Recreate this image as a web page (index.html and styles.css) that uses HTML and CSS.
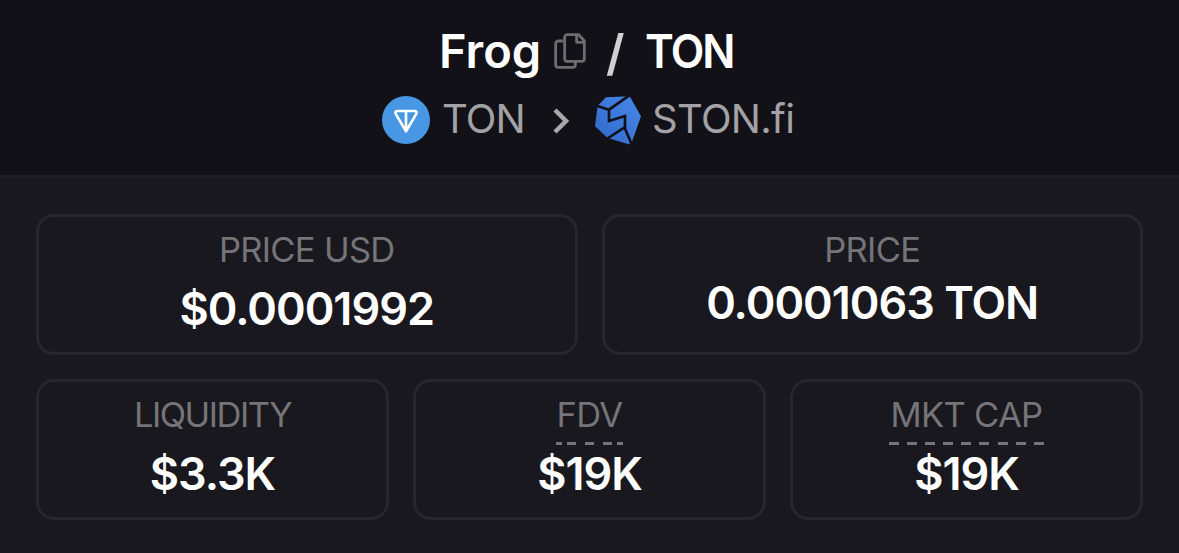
FILE: index.html
```
<!DOCTYPE html>
<html lang="en">
<head>
    <meta charset="UTF-8">
    <meta name="viewport" content="width=device-width, initial-scale=1.0">
    <title>Frog / TON</title>
    <link rel="stylesheet" href="styles.css">
</head>
<body>
    <header class="pair-header">
        <h1 class="pair">
            <span class="base">Frog</span>
            <svg class="copy-icon" viewBox="0 0 96 108">
                <path d="M28 24H13a8 8 0 0 0-8 8v63a8 8 0 0 0 8 8h43a8 8 0 0 0 8-8V86" />
                <path d="M40 5h34l17 18v54a8 8 0 0 1-8 8H40a8 8 0 0 1-8-8V13a8 8 0 0 1 8-8z" />
                <path d="M68 6v22h22" />
            </svg>
            <span class="slash">/</span>
            <span class="quote">TON</span>
        </h1>
        <div class="route">
            <svg class="ton-icon" viewBox="0 0 144 144">
                <circle cx="72" cy="72" r="72" fill="#4797e4" />
                <path d="M46 45H98Q107 46 102 55L72 106L42 55Q37 46 46 45ZM72 45V104" />
            </svg>
            <span class="chain">TON</span>
            <svg class="chevron" viewBox="0 0 16 26">
                <path d="M2 2L13 13L2 24" />
            </svg>
            <svg class="ston-icon" viewBox="45 33 138 147">
                <defs>
                    <linearGradient id="ston" x1="0" y1="1" x2="1" y2="0">
                        <stop offset="0" stop-color="#2f68c9" />
                        <stop offset="1" stop-color="#4787ea" />
                    </linearGradient>
                </defs>
                <path d="M78 37L149 34L183 94L155 173L146 178L83 159L45 124L53 62Z" fill="url(#ston)" />
                <path class="crack" d="M52 63L87 74L148 31M87 74V108L135 93V126L80 162M133 126L156 180" />
            </svg>
            <span class="dex">STON.fi</span>
        </div>
    </header>

    <main class="stats">
        <div class="row">
            <div class="card">
                <span class="label">PRICE USD</span>
                <span class="value">$0.0001992</span>
            </div>
            <div class="card">
                <span class="label">PRICE</span>
                <span class="value value-ton">0.0001063 TON</span>
            </div>
        </div>
        <div class="row">
            <div class="card">
                <span class="label label-liq">LIQUIDITY</span>
                <span class="value">$3.3K</span>
            </div>
            <div class="card">
                <span class="label hint hint-fdv">FDV</span>
                <span class="value">$19K</span>
            </div>
            <div class="card">
                <span class="label hint hint-cap">MKT CAP</span>
                <span class="value">$19K</span>
            </div>
        </div>
    </main>
</body>
</html>
```
FILE: styles.css
```
* {
    box-sizing: border-box;
}

body {
    margin: 0;
    height: 553px;
    overflow: hidden;
    background: #19181e;
    color: #fff;
    font-family: Inter, "Liberation Sans", sans-serif;
}

.pair-header {
    height: 178px;
    padding-top: 20px;
    background: #121117;
    border-bottom: 3px solid #1f1e24;
}

.pair {
    display: flex;
    align-items: center;
    height: 62px;
    margin: 0;
    padding-left: 439px;
    font-size: 47px;
    font-weight: 600;
    line-height: 62px;
    white-space: nowrap;
}

.base {
    width: 115px;
}

.copy-icon {
    width: 32px;
    height: 36px;
    margin-right: 20px;
    fill: none;
    stroke: #6c6b70;
    stroke-width: 8.5;
    stroke-linejoin: round;
}

.slash {
    width: 39px;
    padding-top: 4px;
    color: #d0d0d2;
    font-size: 49px;
    font-weight: 600;
}

.quote {
    letter-spacing: -2px;
    transform: scaleX(0.93);
    transform-origin: left;
}

.route {
    display: flex;
    align-items: center;
    height: 76px;
    padding-left: 382px;
    color: #a3a2a7;
    font-size: 40px;
    font-weight: 400;
    line-height: 48px;
    white-space: nowrap;
}

.ton-icon {
    width: 48px;
    height: 48px;
    margin-right: 12px;
}

.ton-icon path {
    fill: none;
    stroke: #fff;
    stroke-width: 8;
    stroke-linejoin: round;
}

.chain {
    width: 111px;
    padding-bottom: 2px;
    letter-spacing: -0.9px;
}

.chevron {
    width: 16px;
    height: 26px;
    margin: 2px 26px 0 0;
    fill: none;
    stroke: #a9a8ac;
    stroke-width: 4.5;
}

.ston-icon {
    width: 46px;
    height: 49px;
    margin-right: 11px;
}

.dex {
    padding-bottom: 2px;
    letter-spacing: -0.7px;
}

.crack {
    fill: none;
    stroke: #121117;
    stroke-width: 8;
}

.stats {
    display: flex;
    flex-direction: column;
    gap: 24px;
    padding: 36px 36px 0;
}

.row {
    display: flex;
    gap: 24px;
}

.card {
    display: flex;
    flex: 1;
    flex-direction: column;
    align-items: center;
    height: 141px;
    padding-top: 8px;
    border: 3px solid #27262c;
    border-radius: 18px;
}

.label {
    height: 55px;
    color: #757478;
    font-size: 34.5px;
    font-weight: 400;
    letter-spacing: -0.7px;
    line-height: 49px;
    white-space: nowrap;
}

.label-liq {
    letter-spacing: -1.5px;
}

.value {
    margin-top: 2px;
    font-size: 45px;
    font-weight: 600;
    letter-spacing: -1px;
    line-height: 54px;
    white-space: nowrap;
}

.value-ton {
    margin-top: -4px;
}

.hint {
    text-align: center;
    background-repeat: no-repeat;
    background-position: left bottom;
    background-size: 100% 3px;
}

.hint-fdv {
    width: 67px;
    background-image: linear-gradient(90deg, #757478 6px, transparent 6px 11px, #757478 11px 20px, transparent 20px 29px, #757478 29px 38px, transparent 38px 47px, #757478 47px 56px, transparent 56px 61px, #757478 61px);
}

.hint-cap {
    width: 155px;
    background-image: repeating-linear-gradient(90deg, #757478 0 10px, transparent 10px 18.1px);
}
```
